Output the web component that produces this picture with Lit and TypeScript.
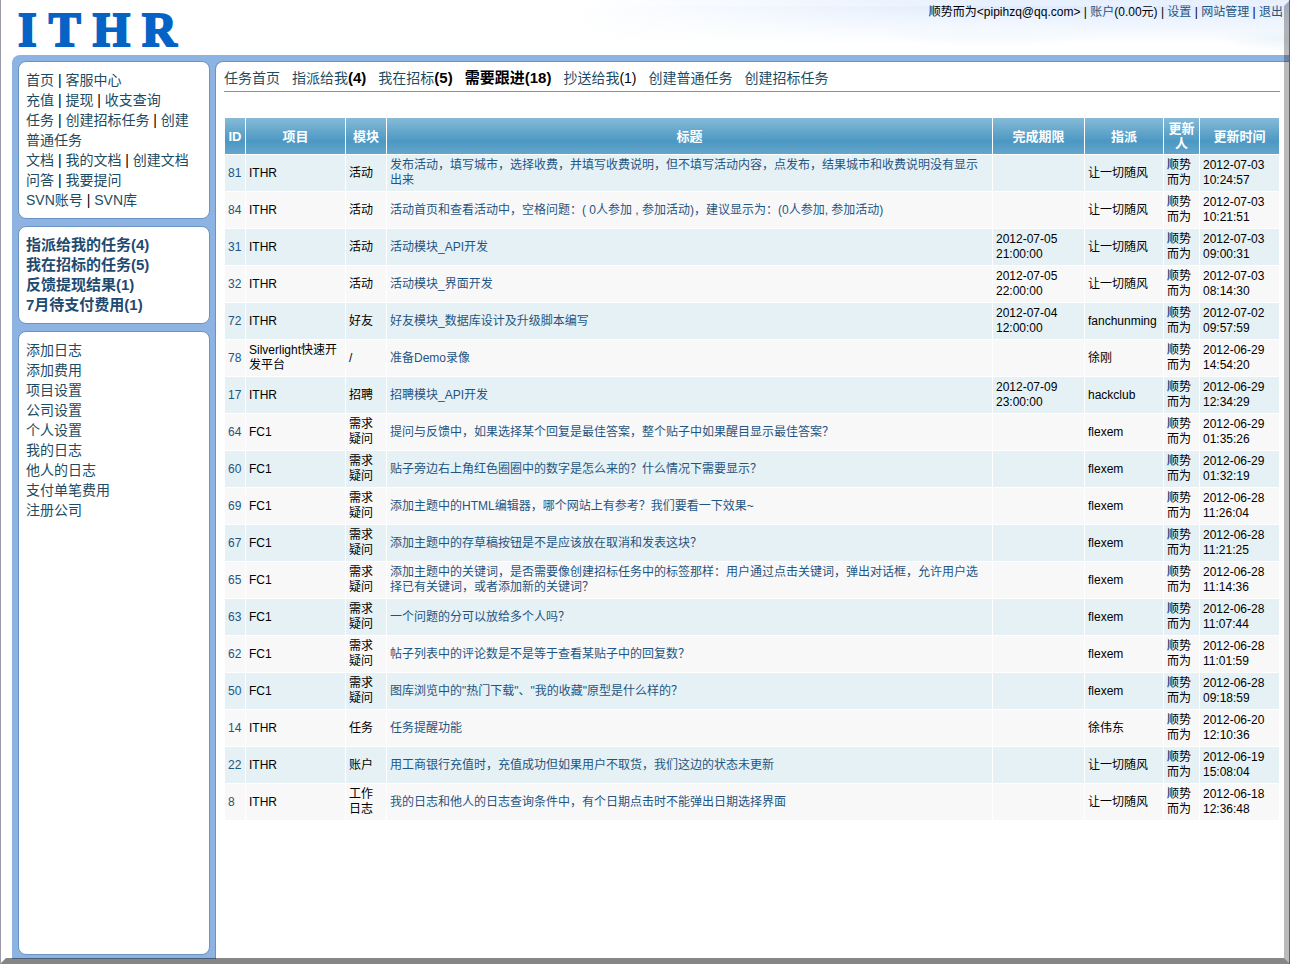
import { LitElement, html, css } from "lit";
import { customElement } from "lit/decorators.js";
import { classMap } from "lit/directives/class-map.js";

interface Task {
  id: number;
  project: string;
  module: string;
  title: string;
  due?: string;
  assignee: string;
  updated: string;
}

const TASKS: Task[] = [
  { id: 81, project: "ITHR", module: "活动", title: "发布活动，填写城市，选择收费，并填写收费说明，但不填写活动内容，点发布，结果城市和收费说明没有显示出来", assignee: "让一切随风", updated: "2012-07-03 10:24:57" },
  { id: 84, project: "ITHR", module: "活动", title: "活动首页和查看活动中，空格问题：( 0人参加 , 参加活动)，建议显示为：(0人参加, 参加活动)", assignee: "让一切随风", updated: "2012-07-03 10:21:51" },
  { id: 31, project: "ITHR", module: "活动", title: "活动模块_API开发", due: "2012-07-05 21:00:00", assignee: "让一切随风", updated: "2012-07-03 09:00:31" },
  { id: 32, project: "ITHR", module: "活动", title: "活动模块_界面开发", due: "2012-07-05 22:00:00", assignee: "让一切随风", updated: "2012-07-03 08:14:30" },
  { id: 72, project: "ITHR", module: "好友", title: "好友模块_数据库设计及升级脚本编写", due: "2012-07-04 12:00:00", assignee: "fanchunming", updated: "2012-07-02 09:57:59" },
  { id: 78, project: "Silverlight快速开发平台", module: "/", title: "准备Demo录像", assignee: "徐刚", updated: "2012-06-29 14:54:20" },
  { id: 17, project: "ITHR", module: "招聘", title: "招聘模块_API开发", due: "2012-07-09 23:00:00", assignee: "hackclub", updated: "2012-06-29 12:34:29" },
  { id: 64, project: "FC1", module: "需求疑问", title: "提问与反馈中，如果选择某个回复是最佳答案，整个贴子中如果醒目显示最佳答案？", assignee: "flexem", updated: "2012-06-29 01:35:26" },
  { id: 60, project: "FC1", module: "需求疑问", title: "贴子旁边右上角红色圈圈中的数字是怎么来的？什么情况下需要显示？", assignee: "flexem", updated: "2012-06-29 01:32:19" },
  { id: 69, project: "FC1", module: "需求疑问", title: "添加主题中的HTML编辑器，哪个网站上有参考？我们要看一下效果~", assignee: "flexem", updated: "2012-06-28 11:26:04" },
  { id: 67, project: "FC1", module: "需求疑问", title: "添加主题中的存草稿按钮是不是应该放在取消和发表这块？", assignee: "flexem", updated: "2012-06-28 11:21:25" },
  { id: 65, project: "FC1", module: "需求疑问", title: "添加主题中的关键词，是否需要像创建招标任务中的标签那样：用户通过点击关键词，弹出对话框，允许用户选择已有关键词，或者添加新的关键词？", assignee: "flexem", updated: "2012-06-28 11:14:36" },
  { id: 63, project: "FC1", module: "需求疑问", title: "一个问题的分可以放给多个人吗？", assignee: "flexem", updated: "2012-06-28 11:07:44" },
  { id: 62, project: "FC1", module: "需求疑问", title: "帖子列表中的评论数是不是等于查看某贴子中的回复数？", assignee: "flexem", updated: "2012-06-28 11:01:59" },
  { id: 50, project: "FC1", module: "需求疑问", title: '图库浏览中的"热门下载"、"我的收藏"原型是什么样的？', assignee: "flexem", updated: "2012-06-28 09:18:59" },
  { id: 14, project: "ITHR", module: "任务", title: "任务提醒功能", assignee: "徐伟东", updated: "2012-06-20 12:10:36" },
  { id: 22, project: "ITHR", module: "账户", title: "用工商银行充值时，充值成功但如果用户不取货，我们这边的状态未更新", assignee: "让一切随风", updated: "2012-06-19 15:08:04" },
  { id: 8, project: "ITHR", module: "工作日志", title: "我的日志和他人的日志查询条件中，有个日期点击时不能弹出日期选择界面", assignee: "让一切随风", updated: "2012-06-18 12:36:48" },
];

const COLUMNS = [
  { name: "ID", cls: "c-id" },
  { name: "项目", cls: "c-project" },
  { name: "模块", cls: "c-module" },
  { name: "标题", cls: "c-title" },
  { name: "完成期限", cls: "c-due" },
  { name: "指派", cls: "c-assignee" },
  { name: "更新人", cls: "c-updater" },
  { name: "更新时间", cls: "c-updated" },
];

const NAV_ROWS = [
  ["首页", "客服中心"],
  ["充值", "提现", "收支查询"],
  ["任务", "创建招标任务", "创建普通任务"],
  ["文档", "我的文档", "创建文档"],
  ["问答", "我要提问"],
  ["SVN账号", "SVN库"],
];

const ALERTS = ["指派给我的任务(4)", "我在招标的任务(5)", "反馈提现结果(1)", "7月待支付费用(1)"];

const TOOLS = ["添加日志", "添加费用", "项目设置", "公司设置", "个人设置", "我的日志", "他人的日志", "支付单笔费用", "注册公司"];

const TABS: { label: string; count?: string; strong?: boolean; current?: boolean }[] = [
  { label: "任务首页" },
  { label: "指派给我", count: "(4)", strong: true },
  { label: "我在招标", count: "(5)", strong: true },
  { label: "需要跟进", count: "(18)", strong: true, current: true },
  { label: "抄送给我", count: "(1)" },
  { label: "创建普通任务" },
  { label: "创建招标任务" },
];

const base = css`
  a {
    color: inherit;
    text-decoration: none;
  }
  a:hover {
    text-decoration: underline;
  }
  ul {
    list-style: none;
    margin: 0;
    padding: 0;
  }
`;

@customElement("site-header")
export class SiteHeader extends LitElement {
  static styles = [
    base,
    css`
      :host {
        display: flex;
        justify-content: space-between;
        align-items: flex-start;
        height: 55px;
        padding: 0 7px 0 18px;
        background:
          radial-gradient(ellipse 110px 16px at calc(100% - 300px) 32px, #f3f9fd, transparent),
          radial-gradient(ellipse 60px 14px at calc(100% - 10px) 38px, #edf5fa, transparent),
          linear-gradient(to left, transparent 300px, #fff 720px),
          linear-gradient(#dbe8fc, #eaf2fe 18px, #fff 44px);
      }
      .logo {
        display: flex;
        gap: 12px;
        margin: 3px 0 0;
        font: bold 48px/54px "Liberation Serif", serif;
        color: #0563c6;
        -webkit-text-stroke: 2px #0563c6;
      }
      .account {
        font-size: 12px;
        line-height: 16px;
        padding-top: 4px;
        color: #000;
      }
      .account a {
        color: #1f5582;
      }
    `,
  ];

  render() {
    return html`
      <h1 class="logo" aria-label="ITHR"><span>I</span><span>T</span><span>H</span><span>R</span></h1>
      <nav class="account">
        顺势而为&lt;pipihzq@qq.com&gt; | <a href="#">账户</a>(0.00元) | <a href="#">设置</a> |
        <a href="#">网站管理</a> | <a href="#">退出</a>
      </nav>
    `;
  }
}

@customElement("side-bar")
export class SideBar extends LitElement {
  static styles = [
    base,
    css`
      :host {
        display: flex;
        flex-direction: column;
        gap: 7px;
        flex: 0 0 192px;
        padding: 6px 5px 4px 6px;
        font-size: 14px;
        line-height: 20px;
        color: #1d4c62;
      }
      .panel {
        background: #fff;
        border: 1px solid #6a93c3;
        border-radius: 8px;
        padding: 8px 14px 8px 7px;
      }
      .sep {
        color: #000;
      }
      .alerts {
        font-size: 15px;
        font-weight: bold;
        color: #1f4a70;
      }
      .tools {
        flex: 1;
      }
    `,
  ];

  render() {
    return html`
      <nav class="panel">
        <ul>
          ${NAV_ROWS.map(
            (row) => html`<li>
              ${row.map((name, i) => html`${i ? html`<span class="sep"> | </span>` : ""}<a href="#">${name}</a>`)}
            </li>`,
          )}
        </ul>
      </nav>
      <ul class="panel alerts">
        ${ALERTS.map((name) => html`<li><a href="#">${name}</a></li>`)}
      </ul>
      <ul class="panel tools">
        ${TOOLS.map((name) => html`<li><a href="#">${name}</a></li>`)}
      </ul>
    `;
  }
}

@customElement("task-tabs")
export class TaskTabs extends LitElement {
  static styles = [
    base,
    css`
      :host {
        display: block;
        font-size: 14px;
        line-height: 20px;
        border-bottom: 1px solid #8e9094;
      }
      ul {
        display: flex;
        flex-wrap: wrap;
        gap: 0 12px;
        padding: 6px 0 3px;
      }
      li {
        height: 20px;
      }
      a {
        color: #1d4c62;
      }
      .count {
        color: #000;
      }
      .strong {
        font-size: 15px;
        font-weight: bold;
      }
      .current a {
        color: #000;
        font-size: 15px;
        font-weight: bold;
      }
    `,
  ];

  render() {
    return html`<ul>
      ${TABS.map(
        (t) => html`<li class=${classMap({ current: !!t.current })}>
          <a href="#">${t.label}</a>${t.count
            ? html`<span class=${classMap({ count: true, strong: !!t.strong })}>${t.count}</span>`
            : ""}
        </li>`,
      )}
    </ul>`;
  }
}

@customElement("task-table")
export class TaskTable extends LitElement {
  static styles = [
    base,
    css`
      :host {
        display: block;
        font-size: 12px;
        line-height: 15px;
      }
      table {
        width: 100%;
        table-layout: fixed;
        border-collapse: separate;
        border-spacing: 1px;
      }
      th,
      td {
        height: 30px;
        padding: 3px;
        overflow-wrap: break-word;
      }
      th {
        color: #fff;
        font-size: 13px;
        font-weight: bold;
        background: linear-gradient(#87bad6, #4b98c4 65%, #66a5cb);
      }
      td {
        text-align: left;
        vertical-align: middle;
        background: #f8f8f8;
      }
      tbody tr:nth-child(odd) td {
        background: #e5f1f5;
      }
      td a {
        color: #1f5582;
      }
      .c-id {
        width: 14px;
      }
      .c-project {
        width: 93px;
      }
      .c-module {
        width: 34px;
      }
      .c-due {
        width: 85px;
      }
      .c-assignee {
        width: 72px;
      }
      .c-updater {
        width: 29px;
      }
      .c-updated {
        width: 73px;
      }
      .stamp {
        padding-right: 10px;
      }
      .module {
        padding-right: 10px;
      }
    `,
  ];

  render() {
    return html`<table>
      <thead>
        <tr>
          ${COLUMNS.map((c) => html`<th scope="col" class=${c.cls}>${c.name}</th>`)}
        </tr>
      </thead>
      <tbody>
        ${TASKS.map(
          (t) => html`<tr>
            <td><a href="#">${t.id}</a></td>
            <td>${t.project}</td>
            <td class="module">${t.module}</td>
            <td><a href="#">${t.title}</a></td>
            <td class="stamp">${t.due ?? ""}</td>
            <td>${t.assignee}</td>
            <td>顺势而为</td>
            <td class="stamp">${t.updated}</td>
          </tr>`,
        )}
      </tbody>
    </table>`;
  }
}

@customElement("app-root")
export class AppRoot extends LitElement {
  static styles = css`
    :host {
      display: flex;
      flex-direction: column;
      box-sizing: border-box;
      position: relative;
      min-height: 100vh;
      padding-bottom: 5px;
      background: #fff;
      font-family: "Liberation Sans", Arial, "Noto Sans CJK SC", sans-serif;
    }
    /* bevelled window edge laid over the page */
    :host::before,
    :host::after {
      content: "";
      position: absolute;
      inset: 0;
      pointer-events: none;
      border: solid transparent;
    }
    :host::before {
      border-width: 6px;
      border-color: rgba(255, 255, 255, 0.3) rgba(0, 0, 0, 0.27) rgba(0, 0, 0, 0.47) transparent;
    }
    :host::after {
      border-width: 0 1px;
      border-color: #5a626c #5a626c transparent #9a9aa8;
    }
    .shell {
      flex: 1;
      display: flex;
      margin-left: 12px;
      background: #8db3e2;
      border-top-left-radius: 8px;
    }
    main {
      flex: 1;
      min-width: 0;
      margin-top: 6px;
      padding: 0 10px 24px 8px;
      background: #fff;
      border: solid #6a93c3;
      border-width: 1px 0 0 1px;
      border-top-left-radius: 8px;
    }
    task-table {
      margin-top: 25px;
    }
  `;

  render() {
    return html`
      <site-header></site-header>
      <div class="shell">
        <side-bar></side-bar>
        <main>
          <task-tabs></task-tabs>
          <task-table></task-table>
        </main>
      </div>
    `;
  }
}
